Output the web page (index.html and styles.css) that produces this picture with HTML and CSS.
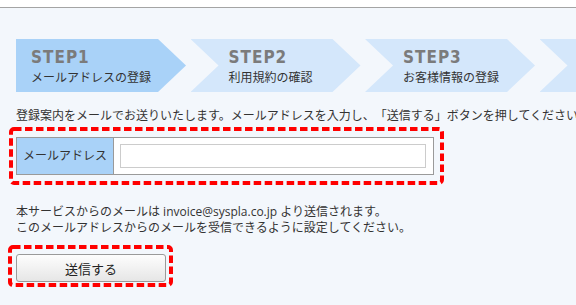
FILE: index.html
```html
<!DOCTYPE html>
<html lang="ja">

<head>
  <meta charset="UTF-8" />
  <meta name="viewport" content="width=device-width, initial-scale=1.0" />
  <title>メールアドレスの登録</title>
  <link rel="stylesheet" href="styles.css">
</head>

<body>
  <div class="topbar"></div>

  <div class="page">
    <ol class="steps">
      <li class="step first current">
        <span class="step-no">STEP1</span>
        <span class="step-name">メールアドレスの登録</span>
      </li>
      <li class="step">
        <span class="step-no">STEP2</span>
        <span class="step-name">利用規約の確認</span>
      </li>
      <li class="step">
        <span class="step-no">STEP3</span>
        <span class="step-name">お客様情報の登録</span>
      </li>
      <li class="step">
        <span class="step-no">STEP4</span>
        <span class="step-name">登録完了</span>
      </li>
    </ol>

    <p class="lead">登録案内をメールでお送りいたします。メールアドレスを入力し、「送信する」ボタンを押してください。</p>

    <div class="mark mark-form">
      <table class="form-table">
        <tr>
          <th>メールアドレス</th>
          <td><input type="text" class="text-input"></td>
        </tr>
      </table>
      <svg class="mark-line" width="435" height="58" viewBox="0 0 435 58">
        <rect x="2" y="2" width="431" height="54" rx="3" />
      </svg>
    </div>

    <p class="note">
      本サービスからのメールは invoice@syspla.co.jp より送信されます。<br>
      このメールアドレスからのメールを受信できるように設定してください。
    </p>

    <div class="mark mark-button">
      <button type="button" class="send-btn">送信する</button>
      <svg class="mark-line" width="165" height="42" viewBox="0 0 165 42">
        <rect x="2" y="2" width="161" height="38" rx="3" />
      </svg>
    </div>
  </div>
</body>

</html>
```

FILE: styles.css
```css
:root {
  --bg: #f3f7fc;
  --step-on: #a9d2f8;
  --step-off: #d4e7fb;
  --text: #333333;
  --mark: #ff0000;
}

* {
  margin: 0;
  padding: 0;
  box-sizing: border-box;
}

body {
  font-family: 'Open Sans', 'Noto Sans CJK JP', sans-serif;
  font-size: 12px;
  line-height: 16px;
  color: var(--text);
  background-color: var(--bg);
  text-spacing-trim: space-all;
  overflow: hidden;
}

.topbar {
  height: 8px;
  background-color: #ffffff;
  border-bottom: 1px solid #a4a4a4;
}

.page {
  padding: 31px 0 0 16px;
}

/* step arrows */
.steps {
  list-style: none;
  display: flex;
  gap: 4.5px;
  white-space: nowrap;
}

.step {
  flex: 0 0 170px;
  height: 53px;
  padding: 9px 0 0 38px;
  background-color: var(--step-off);
  display: flex;
  flex-direction: column;
  clip-path: polygon(0 0, 142px 0, 170px 50%, 142px 100%, 0 100%, 28px 50%);
}

.step.first {
  padding-left: 15px;
  clip-path: polygon(0 0, 142px 0, 170px 50%, 142px 100%, 0 100%);
}

.step.current {
  background-color: var(--step-on);
}

.step-no {
  font-family: 'DejaVu Sans Condensed', 'Liberation Sans', sans-serif;
  font-weight: bold;
  font-size: 17px;
  line-height: 18px;
  letter-spacing: 1px;
  color: #7b7b7b;
}

.step-name {
  margin-top: 5px;
  line-height: 14px;
}

.lead {
  margin-top: 16px;
  white-space: nowrap;
}

/* red dashed marks */
.mark {
  position: relative;
  margin-left: -7px;
}

.mark-line {
  position: absolute;
  left: 0;
  top: 0;
  pointer-events: none;
}

.mark-line rect {
  fill: none;
  stroke: var(--mark);
  stroke-width: 4;
  stroke-dasharray: 7.5 3.5;
}

.mark-form {
  width: 435px;
  height: 58px;
  margin-top: 3px;
  padding: 10px 0 0 7px;
}

.form-table {
  width: 418px;
  border-collapse: collapse;
}

.form-table th,
.form-table td {
  height: 37px;
  border: 1px solid #9a9a9a;
}

.form-table th {
  width: 97px;
  padding-left: 6px;
  text-align: left;
  font-weight: normal;
  background-color: var(--step-on);
}

.form-table td {
  padding: 0 7px 0 6px;
  background-color: #ffffff;
}

.text-input {
  display: block;
  width: 100%;
  height: 24px;
  border: 1px solid #cccccc;
  background-color: #ffffff;
}

.note {
  margin-top: 19px;
}

.mark-button {
  width: 165px;
  height: 42px;
  margin-top: 9px;
  margin-left: -8px;
  padding: 9px 0 0 8px;
}

.send-btn {
  width: 150px;
  height: 28px;
  font-family: 'Open Sans', 'Noto Sans CJK JP', sans-serif;
  font-size: 13px;
  color: #222222;
  border: 1px solid #9a9a9a;
  border-radius: 3px;
  background: linear-gradient(#fdfdfd, #e6e6e6);
}
```
